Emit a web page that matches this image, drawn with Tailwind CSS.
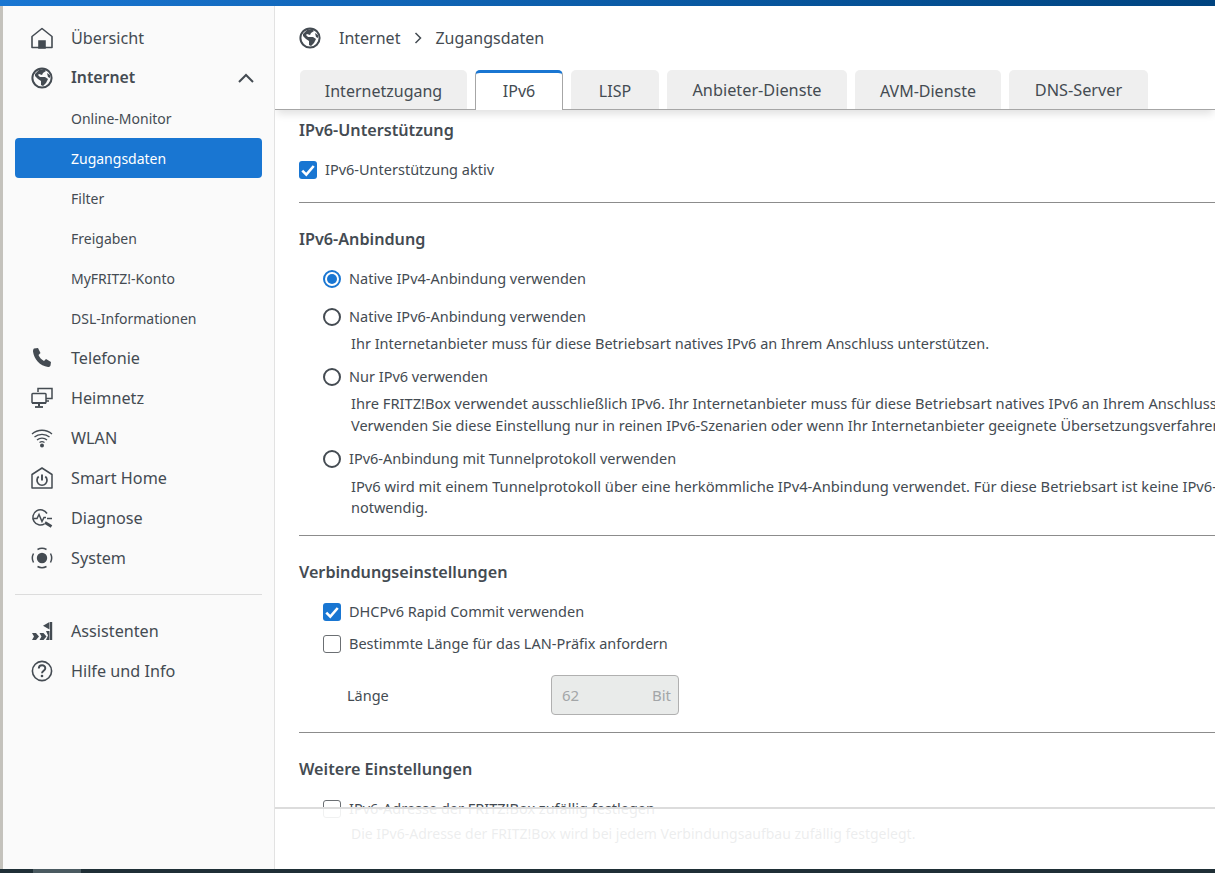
<!DOCTYPE html>
<html lang="de">
<head>
  <meta charset="UTF-8">
  <title>FRITZ!Box - Zugangsdaten</title>
  <script src="https://cdn.jsdelivr.net/npm/@tailwindcss/browser@4"></script>
</head>
<body class="h-[873px] w-[1215px] overflow-hidden flex flex-col bg-white font-['Noto_Sans','Open_Sans',sans-serif] text-[#444b52]">
  <!-- top bar -->
  <div class="h-[6px] shrink-0 bg-gradient-to-r from-[#1976d2] to-[#00437f]"></div>

  <div class="flex flex-1 min-h-0">
    <!-- left edge + sidebar -->
    <div class="w-[3px] shrink-0 bg-[#c4c2bc]"></div>
    <aside class="w-[272px] shrink-0 bg-[#fafafa] border-r border-[#e2e2e2] pt-[12px] pl-[12px] pr-[12px] text-[16.2px]">
      <a class="h-[40px] flex items-center">
        <svg class="w-[22px] h-[22px] ml-[16px]" viewBox="0 0 22 22" fill="none" stroke="#444b52" stroke-width="1.6"><path d="M1 9.500 11 1.500l10 8V20.500H1z" stroke-linejoin="round"/><path d="M8 21v-7h6v7z" fill="#444b52"/></svg>
        <span class="ml-[18px]">Übersicht</span>
      </a>
      <a class="h-[40px] flex items-center">
        <svg class="w-[22px] h-[22px] ml-[16px]" viewBox="0 0 22 22"><circle cx="11" cy="11" r="9.600" fill="none" stroke="#444b52" stroke-width="2"/><path d="M4 7l4-4 5-1 2 2-3 2-1 2-3-1-1 1 2 2 5 0 3 2-2 4-3 3-2-1v-4l-3-2-3-3z" fill="#444b52"/><path d="M16 6l3 2 0 3-2-1z" fill="#444b52"/></svg>
        <span class="ml-[18px] font-semibold text-[15.800px]">Internet</span>
        <svg class="w-[16px] h-[10px] ml-auto mr-[8px]" viewBox="0 0 16 10" fill="none" stroke="#444b52" stroke-width="2"><path d="M1 9l7-7 7 7"/></svg>
      </a>
      <a class="h-[40px] flex items-center pl-[56px] text-[14px]">Online-Monitor</a>
      <a class="h-[40px] flex items-center pl-[56px] text-[14px] bg-[#1976d2] text-white rounded-[4px]">Zugangsdaten</a>
      <a class="h-[40px] flex items-center pl-[56px] text-[14px]">Filter</a>
      <a class="h-[40px] flex items-center pl-[56px] text-[14px]">Freigaben</a>
      <a class="h-[40px] flex items-center pl-[56px] text-[14px]">MyFRITZ!-Konto</a>
      <a class="h-[40px] flex items-center pl-[56px] text-[14px]">DSL-Informationen</a>
      <a class="h-[40px] flex items-center">
        <svg class="w-[22px] h-[22px] ml-[16px]" viewBox="0 0 22 22" fill="#444b52"><path d="M3 1.500 7 1l2.500 5-2 2c1 2.500 3 4.500 5.500 6l2-2 5 3-.5 3.500c-.5 1-1.500 1.500-2.500 1.500C9 19 3 12 2 4.500 2 3 2.300 2 3 1.500z"/></svg>
        <span class="ml-[18px]">Telefonie</span>
      </a>
      <a class="h-[40px] flex items-center">
        <svg class="w-[22px] h-[22px] ml-[16px]" viewBox="0 0 22 22" fill="none" stroke="#444b52" stroke-width="1.500"><path d="M7 5V1.500h14v10h-6"/><path d="M15 14h3" /><rect x="1" y="6.500" width="14" height="9.500" rx=".8" fill="#fafafa"/><path d="M1 16h14" stroke-width="2"/><path d="M8 16v3.500" stroke-width="2"/><path d="M4 20h8" stroke-width="1.800"/></svg>
        <span class="ml-[18px]">Heimnetz</span>
      </a>
      <a class="h-[40px] flex items-center">
        <svg class="w-[22px] h-[22px] ml-[16px]" viewBox="0 0 22 22" fill="none" stroke="#444b52" stroke-width="1.300"><path d="M1 7c5.500-5 14.500-5 20 0M3.500 10c4-3.600 11-3.600 15 0M6 13c2.800-2.400 7.200-2.400 10 0M8.500 15.500c1.400-1 3.600-1 5 0"/><circle cx="11" cy="18.500" r="2" fill="#444b52" stroke="none"/></svg>
        <span class="ml-[18px]">WLAN</span>
      </a>
      <a class="h-[40px] flex items-center">
        <svg class="w-[22px] h-[22px] ml-[16px]" viewBox="0 0 22 22" fill="none" stroke="#444b52" stroke-width="1.500"><path d="M1 7.500 11 1l10 6.500V21H1z" stroke-linejoin="round"/><path d="M7.700 9.500a5 5 0 1 0 6.600 0" stroke-width="1.700"/><path d="M11 7.500v6" stroke-width="1.900"/></svg>
        <span class="ml-[18px]">Smart Home</span>
      </a>
      <a class="h-[40px] flex items-center">
        <svg class="w-[22px] h-[22px] ml-[16px]" viewBox="0 0 22 22" fill="none" stroke="#444b52" stroke-width="1.500"><path d="M13.500 16.800A7.600 7.600 0 1 1 16 6.500"/><path d="M2.500 11.500H6l2-4 3 7 2-4h2"/><path d="M14 15.500l6.500 4" stroke-width="2.800"/><path d="M16 11.500h5" /></svg>
        <span class="ml-[18px]">Diagnose</span>
      </a>
      <a class="h-[40px] flex items-center">
        <svg class="w-[22px] h-[22px] ml-[16px]" viewBox="0 0 22 22" fill="none" stroke="#444b52" stroke-width="1.500"><circle cx="11" cy="11" r="5.200" fill="#444b52" stroke="none"/><path d="M2.500 15.500A9.600 9.600 0 0 1 2.500 6.500M6.500 2.500a9.600 9.600 0 0 1 9 0M19.500 6.500a9.600 9.600 0 0 1 0 9M15.500 19.500a9.600 9.600 0 0 1-9 0"/></svg>
        <span class="ml-[18px]">System</span>
      </a>
      <div class="border-t border-[#dcdcdc] mt-[16px] mb-[16px]"></div>
      <a class="h-[40px] flex items-center">
        <svg class="w-[22px] h-[22px] ml-[16px]" viewBox="0 0 22 22" fill="#444b52"><path d="M1 13h4l3 3.500-3 3.500H1l2-3.500zM8.500 13h4l3 3.500-3 3.500h-4l2-3.500zM15 11h3.500v9H15l2-4.500zM18.500 2v7.500L12 5.700z"/><rect x="19" y="2" width="2.200" height="18"/></svg>
        <span class="ml-[18px]">Assistenten</span>
      </a>
      <a class="h-[40px] flex items-center">
        <svg class="w-[22px] h-[22px] ml-[16px]" viewBox="0 0 22 22"><circle cx="11" cy="11" r="9.600" fill="none" stroke="#444b52" stroke-width="1.600"/><path d="M7.800 8.500c0-4.300 6.500-4.300 6.500-.2 0 2.500-3.300 2.500-3.300 5" fill="none" stroke="#444b52" stroke-width="1.900"/><circle cx="11" cy="16" r="1.300" fill="#444b52"/></svg>
        <span class="ml-[18px]">Hilfe und Info</span>
      </a>
    </aside>

    <!-- main column -->
    <main class="relative flex-1 min-w-0 overflow-hidden">
      <div class="h-[64px] flex items-center pl-[24px] text-[16px]">
        <svg class="w-[22px] h-[22px]" viewBox="0 0 22 22"><circle cx="11" cy="11" r="9.600" fill="none" stroke="#444b52" stroke-width="2"/><path d="M4 7l4-4 5-1 2 2-3 2-1 2-3-1-1 1 2 2 5 0 3 2-2 4-3 3-2-1v-4l-3-2-3-3z" fill="#444b52"/><path d="M16 6l3 2 0 3-2-1z" fill="#444b52"/></svg>
        <span class="ml-[18px]">Internet</span>
        <svg class="w-[8px] h-[12px] ml-[14px]" viewBox="0 0 8 12" fill="none" stroke="#444b52" stroke-width="1.500"><path d="M1.500 1l5 5-5 5"/></svg>
        <span class="ml-[13px]">Zugangsdaten</span>
      </div>

      <!-- tabs -->
      <div class="relative z-10 h-[40px] flex gap-[8px] pl-[25px] border-b border-[#a6a6a6] shadow-[0_6px_8px_-2px_rgba(0,0,0,0.12)] text-[16px] bg-white">
        <div class="w-[167px] h-[39px] pt-[2px] flex items-center justify-center bg-[#efefef] rounded-t-[5px]">Internetzugang</div>
        <div class="w-[88px] h-[40px] pb-[1px] flex items-center justify-center bg-white border-x border-[#a6a6a6] border-t-[3px] border-t-[#1976d2] rounded-t-[5px]">IPv6</div>
        <div class="w-[88px] h-[39px] pt-[2px] flex items-center justify-center bg-[#efefef] rounded-t-[5px]">LISP</div>
        <div class="w-[180px] h-[39px] pt-[2px] flex items-center justify-center bg-[#efefef] rounded-t-[5px] text-[16.300px]">Anbieter-Dienste</div>
        <div class="w-[146px] h-[39px] pt-[2px] flex items-center justify-center bg-[#efefef] rounded-t-[5px]">AVM-Dienste</div>
        <div class="w-[139px] h-[39px] pt-[2px] flex items-center justify-center bg-[#efefef] rounded-t-[5px] text-[16.300px]">DNS-Server</div>
      </div>

      <!-- form content -->
      <div class="pl-[24px] whitespace-nowrap text-[14.5px]">
        <h3 class="h-[20px] mt-[10px] flex items-center font-semibold text-[16.2px]">IPv6-Unterstützung</h3>
        <label class="h-[24px] mt-[18px] flex items-center">
          <span class="w-[18px] h-[18px] rounded-[3px] bg-[#1976d2] flex items-center justify-center"><svg class="w-[16px] h-[16px]" viewBox="0 0 14 14" fill="none" stroke="white" stroke-width="2.300"><path d="M2 7.500l3.500 3.500L12 3.500"/></svg></span>
          <span class="ml-[8px]">IPv6-Unterstützung aktiv</span>
        </label>
        <div class="border-t border-[#8c8c8c] mt-[20px]"></div>

        <h3 class="h-[20px] mt-[26px] flex items-center font-semibold text-[16.2px]">IPv6-Anbindung</h3>
        <div class="pl-[24px]">
          <label class="h-[24px] mt-[18px] flex items-center">
            <span class="w-[18px] h-[18px] rounded-full border-[2px] border-[#1976d2] flex items-center justify-center"><span class="w-[10px] h-[10px] rounded-full bg-[#1976d2]"></span></span>
            <span class="ml-[8px]">Native IPv4-Anbindung verwenden</span>
          </label>
          <label class="h-[24px] mt-[14px] flex items-center">
            <span class="w-[18px] h-[18px] rounded-full border-[2px] border-[#444b52]"></span>
            <span class="ml-[8px]">Native IPv6-Anbindung verwenden</span>
          </label>
          <p class="h-[22px] mt-[4px] pl-[28px] flex items-center">Ihr Internetanbieter muss für diese Betriebsart natives IPv6 an Ihrem Anschluss unterstützen.</p>
          <label class="h-[24px] mt-[10px] flex items-center">
            <span class="w-[18px] h-[18px] rounded-full border-[2px] border-[#444b52]"></span>
            <span class="ml-[8px]">Nur IPv6 verwenden</span>
          </label>
          <p class="h-[22px] mt-[4px] pl-[28px] flex items-center text-[14.65px]">Ihre FRITZ!Box verwendet ausschließlich IPv6. Ihr Internetanbieter muss für diese Betriebsart natives IPv6 an Ihrem Anschluss unterstützen.</p>
          <p class="h-[22px] pl-[28px] flex items-center">Verwenden Sie diese Einstellung nur in reinen IPv6-Szenarien oder wenn Ihr Internetanbieter geeignete Übersetzungsverfahren anbietet.</p>
          <label class="h-[24px] mt-[10px] flex items-center">
            <span class="w-[18px] h-[18px] rounded-full border-[2px] border-[#444b52]"></span>
            <span class="ml-[8px]">IPv6-Anbindung mit Tunnelprotokoll verwenden</span>
          </label>
          <p class="h-[22px] mt-[4px] pl-[28px] flex items-center text-[14.7px]">IPv6 wird mit einem Tunnelprotokoll über eine herkömmliche IPv4-Anbindung verwendet. Für diese Betriebsart ist keine IPv6-Anbindung</p>
          <p class="h-[22px] pl-[28px] flex items-center">notwendig.</p>
        </div>
        <div class="border-t border-[#8c8c8c] mt-[16px]"></div>

        <h3 class="h-[20px] mt-[26px] flex items-center font-semibold text-[16.2px]">Verbindungseinstellungen</h3>
        <div class="pl-[24px]">
          <label class="h-[24px] mt-[18px] flex items-center">
            <span class="w-[18px] h-[18px] rounded-[3px] bg-[#1976d2] flex items-center justify-center"><svg class="w-[16px] h-[16px]" viewBox="0 0 14 14" fill="none" stroke="white" stroke-width="2.300"><path d="M2 7.500l3.500 3.500L12 3.500"/></svg></span>
            <span class="ml-[8px]">DHCPv6 Rapid Commit verwenden</span>
          </label>
          <label class="h-[24px] mt-[8px] flex items-center">
            <span class="w-[18px] h-[18px] rounded-[3px] border-[1.500px] border-[#6b6f73]"></span>
            <span class="ml-[8px]">Bestimmte Länge für das LAN-Präfix anfordern</span>
          </label>
          <div class="h-[40px] mt-[19px] flex items-center">
            <span class="w-[228px] pl-[24px] pt-[2px]">Länge</span>
            <div class="w-[128px] h-[40px] flex items-center justify-between pl-[10px] pr-[7px] bg-[#e9ebea] border border-[#b0b0b0] rounded-[4px] text-[#a3a6a8] text-[15px]">
              <span>62</span><span>Bit</span>
            </div>
          </div>
        </div>
        <div class="border-t border-[#8c8c8c] mt-[17px]"></div>

        <h3 class="h-[20px] mt-[26px] flex items-center font-semibold text-[16.2px]">Weitere Einstellungen</h3>
        <div class="pl-[24px]">
          <label class="h-[24px] mt-[18px] flex items-center">
            <span class="w-[18px] h-[18px] rounded-[3px] border-[1.500px] border-[#6b6f73]"></span>
            <span class="ml-[8px]">IPv6-Adresse der FRITZ!Box zufällig festlegen</span>
          </label>
          <p class="h-[22px] mt-[1px] pl-[28px] flex items-center text-[14px]">Die IPv6-Adresse der FRITZ!Box wird bei jedem Verbindungsaufbau zufällig festgelegt.</p>
        </div>
      </div>

      <!-- footer fade over the content -->
      <div class="absolute left-0 right-0 bottom-0 h-[62px] bg-white/90 border-t-[2px] border-[#dcdcdc]"></div>
    </main>
  </div>

  <!-- bottom strip -->
  <div class="h-[4px] shrink-0 bg-[#1f2f36] pl-[33px]"><div class="w-[48px] h-[4px] bg-[#4a5a60]"></div></div>
</body>
</html>
